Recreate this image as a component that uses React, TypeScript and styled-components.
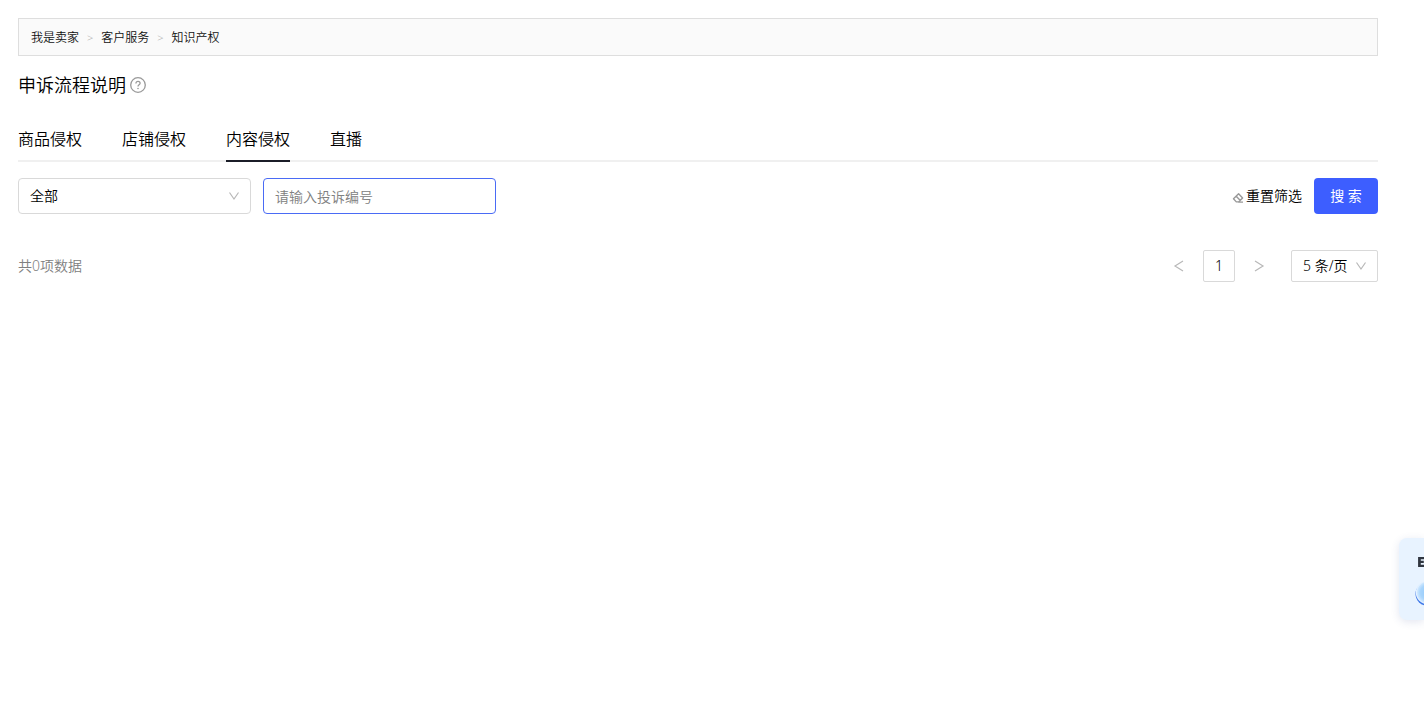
import React from "react";
import styled, { createGlobalStyle } from "styled-components";

const GlobalStyle = createGlobalStyle`
  *, *::before, *::after { box-sizing: border-box; }
  body {
    margin: 0;
    background: #fff;
    color: #000;
    font-family: "Noto Sans", "Noto Sans CJK SC", sans-serif;
    font-size: 14px;
    font-weight: 350;
    line-height: 20px;
  }
  button, input, select { font: inherit; color: inherit; }
`;

const Page = styled.main`
  padding: 18px 46px 18px 18px;
`;

const Breadcrumb = styled.nav`
  display: flex;
  align-items: center;
  gap: 8px;
  height: 38px;
  padding: 2px 12px 0;
  border: 1px solid #dedede;
  background: #fafafa;
  font-size: 12px;
`;

const Crumb = styled.a`
  color: #111;
  text-decoration: none;
`;

const CrumbMark = styled.span`
  color: #aaa;
  font-size: 11px;
`;

const Title = styled.h1`
  display: flex;
  align-items: center;
  gap: 4px;
  margin: 16px 0 0;
  font-size: 18px;
  font-weight: 350;
  line-height: 26px;
`;

const IconButton = styled.button`
  display: flex;
  padding: 0;
  border: 0;
  background: none;
  color: #999;
  cursor: pointer;
`;

const Tabs = styled.div`
  display: flex;
  gap: 40px;
  height: 44px;
  margin-top: 20px;
  box-shadow: inset 0 -2px #f0f0f0;
`;

const Tab = styled.button<{ $active?: boolean }>`
  padding: 0;
  border: 0;
  border-bottom: 2px solid ${(p) => (p.$active ? "#1b1d28" : "transparent")};
  background: none;
  font-size: 16px;
  line-height: 24px;
  cursor: pointer;
`;

const Filters = styled.form`
  display: flex;
  align-items: center;
  gap: 12px;
  margin-top: 16px;
`;

const SelectBox = styled.div<{ $compact?: boolean }>`
  display: grid;
  align-items: center;
  width: ${(p) => (p.$compact ? "87px" : "233px")};
  height: ${(p) => (p.$compact ? "32px" : "36px")};
  border: 1px solid #d9d9d9;
  border-radius: ${(p) => (p.$compact ? "2px" : "4px")};

  & > * { grid-area: 1 / 1; }
  & > svg {
    justify-self: end;
    margin-right: 10px;
    pointer-events: none;
  }
`;

const Select = styled.select`
  width: 100%;
  height: 100%;
  padding: 0 24px 0 11px;
  border: 0;
  outline: 0;
  appearance: none;
  background: none;
`;

const SearchInput = styled.input`
  width: 233px;
  height: 36px;
  padding: 0 11px;
  border: 1px solid #4a6bf5;
  border-radius: 4px;
  outline: 0;
  &::placeholder { color: #808080; opacity: 1; }
`;

const ResetButton = styled.button`
  display: flex;
  align-items: center;
  gap: 2px;
  margin-left: auto;
  padding: 0;
  border: 0;
  background: none;
  cursor: pointer;
  & > svg { margin-top: 3px; }
`;

const SubmitButton = styled.button`
  width: 64px;
  height: 36px;
  padding: 0;
  border: 0;
  border-radius: 4px;
  background: #3d5eff;
  color: #fff;
  font-weight: 400;
  cursor: pointer;
`;

const Footer = styled.div`
  display: flex;
  align-items: center;
  justify-content: space-between;
  margin-top: 36px;
`;

const Total = styled.span`
  color: #808080;
`;

const Pagination = styled.nav`
  display: flex;
  gap: 8px;
`;

const PageButton = styled.button<{ $boxed?: boolean }>`
  display: flex;
  align-items: center;
  justify-content: center;
  width: 32px;
  height: 32px;
  padding: 0;
  border: 1px solid ${(p) => (p.$boxed ? "#d9d9d9" : "transparent")};
  border-radius: 2px;
  background: none;
`;

const PageSize = styled.div`
  margin-left: 8px;
`;

const Assistant = styled.aside`
  position: fixed;
  top: 538px;
  right: 0;
  width: 25px;
  height: 82px;
  border-radius: 8px 0 0 8px;
  background: #e8f3ff;
  box-shadow: 0 2px 8px rgba(60, 80, 150, 0.14);
`;

const AssistantContent = styled.div`
  display: flex;
  flex-direction: column;
  gap: 10px;
  overflow: hidden;
  padding: 14px 0 0 16px;
`;

const AssistantName = styled.strong`
  padding-left: 2px;
  color: #303640;
  font-weight: 900;
`;

const Chevron = ({ direction }: { direction: "down" | "left" | "right" }) => {
  const d = {
    down: "M1.5 2.5 6 9l4.500-6.500",
    left: "M10 1 2 6l8 5",
    right: "M2 1l8 5-8 5",
  }[direction];
  return (
    <svg width="12" height="12" viewBox="0 0 12 12" fill="none" stroke="#b8b8b8" strokeWidth="1.2" aria-hidden="true">
      <path d={d} />
    </svg>
  );
};

const HelpIcon = () => (
  <svg width="16" height="16" viewBox="0 0 16 16" fill="none" stroke="currentColor" strokeWidth="1.3" aria-hidden="true">
    <circle cx="8" cy="8" r="7.300" />
    <path d="M5.900 6.500c0-1.300.9-2.100 2.100-2.100s2.100.8 2.100 1.900c0 1.400-2.100 1.500-2.100 3.100" />
    <circle cx="8" cy="11.500" r=".8" fill="currentColor" stroke="none" />
  </svg>
);

const EraserIcon = () => (
  <svg width="12" height="12" viewBox="0 0 12 12" fill="none" stroke="#999" strokeWidth="1.4" strokeLinejoin="round" aria-hidden="true">
    <path d="M6.600 1.700 1.500 6.800l2.800 3.100h2.300l4-4zM4.200 4.200l3.900 4.100M6.200 10.100h4.800" />
  </svg>
);

const AssistantOrb = () => (
  <svg width="24" height="24" viewBox="0 0 24 24" aria-hidden="true">
    <defs>
      <radialGradient id="orb">
        <stop offset="0" stopColor="#8fc8fb" />
        <stop offset=".7" stopColor="#a9d5fc" />
        <stop offset="1" stopColor="#d0e8ff" />
      </radialGradient>
    </defs>
    <circle cx="12" cy="12" r="11.500" fill="#3f78e8" />
    <circle cx="12.500" cy="10.500" r="11.700" fill="#e3f1ff" />
    <circle cx="13" cy="10.500" r="11" fill="url(#orb)" />
  </svg>
);

const tabs = ["商品侵权", "店铺侵权", "内容侵权", "直播"];

export default function App() {
  return (
    <>
      <GlobalStyle />
      <Page>
        <Breadcrumb aria-label="面包屑">
          <Crumb href="#seller">我是卖家</Crumb>
          <CrumbMark>&gt;</CrumbMark>
          <Crumb href="#service">客户服务</Crumb>
          <CrumbMark>&gt;</CrumbMark>
          <Crumb href="#ip">知识产权</Crumb>
        </Breadcrumb>
        <Title>
          申诉流程说明
          <IconButton type="button" aria-label="帮助">
            <HelpIcon />
          </IconButton>
        </Title>
        <Tabs role="tablist">
          {tabs.map((name) => (
            <Tab key={name} type="button" role="tab" aria-selected={name === "内容侵权"} $active={name === "内容侵权"}>
              {name}
            </Tab>
          ))}
        </Tabs>
        <Filters onSubmit={(e) => e.preventDefault()}>
          <SelectBox>
            <Select aria-label="状态">
              <option>全部</option>
            </Select>
            <Chevron direction="down" />
          </SelectBox>
          <SearchInput aria-label="投诉编号" placeholder="请输入投诉编号" />
          <ResetButton type="reset">
            <EraserIcon />
            重置筛选
          </ResetButton>
          <SubmitButton type="submit">搜 索</SubmitButton>
        </Filters>
        <Footer>
          <Total>共0项数据</Total>
          <Pagination aria-label="分页">
            <PageButton type="button" disabled aria-label="上一页">
              <Chevron direction="left" />
            </PageButton>
            <PageButton type="button" $boxed aria-current="page">
              1
            </PageButton>
            <PageButton type="button" disabled aria-label="下一页">
              <Chevron direction="right" />
            </PageButton>
            <PageSize>
              <SelectBox $compact>
                <Select aria-label="每页条数">
                  <option>5 条/页</option>
                </Select>
                <Chevron direction="down" />
              </SelectBox>
            </PageSize>
          </Pagination>
        </Footer>
      </Page>
      <Assistant>
        <AssistantContent>
          <AssistantName>E</AssistantName>
          <AssistantOrb />
        </AssistantContent>
      </Assistant>
    </>
  );
}
